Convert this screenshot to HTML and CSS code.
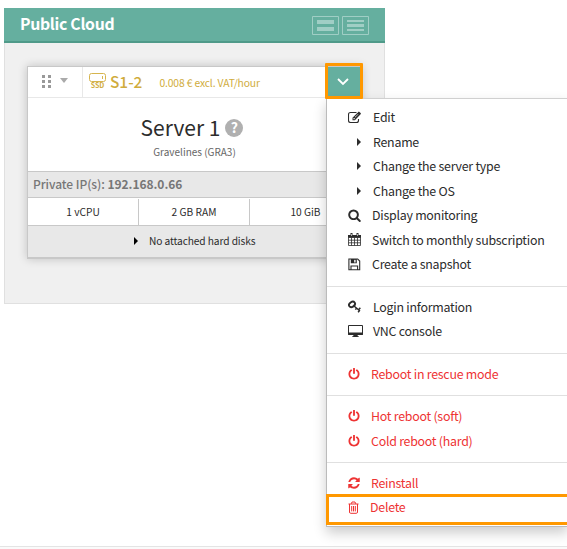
FILE: index.html
```html
<!DOCTYPE html>
<html lang="en">
<head>
<meta charset="utf-8">
<title>Public Cloud</title>
<link rel="stylesheet" href="styles.css">
</head>
<body>
<svg class="defs" width="0" height="0">
  <symbol id="power" viewBox="64 64 1664 1664"><path d="M1664 896q0 156-61 298t-164 245-245 164-298 61-298-61-245-164-164-245-61-298q0-182 80.5-343t226.5-270q43-32 95.5-25t83.5 50q32 42 24.5 94.5t-49.5 84.5q-98 74-151.5 181t-53.5 228q0 104 40.5 198.5t109.5 163.5 163.5 109.5 198.5 40.5 198.5-40.5 163.5-109.5 109.5-163.5 40.5-198.5q0-121-53.5-228t-151.5-181q-42-32-49.5-84.5t24.5-94.5q31-43 84-50t95 25q146 109 226.5 270t80.5 343zm-640-768v640q0 52-38 90t-90 38-90-38-38-90v-640q0-52 38-90t90-38 90 38 38 90z"/></symbol>
  <symbol id="caret" viewBox="0 0 14 14"><path d="M5 3L9 7 5 11z"/></symbol>
</svg>
<main class="page">
  <section class="panel">
    <header class="panel-head">
      <h1>Public Cloud</h1>
      <div class="views">
        <svg width="27" height="19" viewBox="0 0 27 19"><path d="M.5.5h26v18H.5z" fill="none" stroke="#a0cec5"/><path d="M5 4h17v4H5zM5 11h17v4H5z" fill="#a0cec5"/></svg>
        <svg width="27" height="19" viewBox="0 0 27 19"><path d="M.5.5h26v18H.5z" fill="none" stroke="#a0cec5"/><path d="M5 4h17v2H5zM5 8h17v3H5zM5 13h17v2H5z" fill="#a0cec5"/></svg>
      </div>
    </header>
    <article class="card">
      <div class="card-bar">
        <div class="grip">
          <svg width="9" height="14" viewBox="0 0 9 14"><path d="M0 0h3v3H0zM6 0h3v3H6zM0 5h3v3H0zM6 5h3v3H6zM0 10h3v3H0zM6 10h3v3H6z" fill="#999"/></svg>
          <svg class="drop" width="8" height="5" viewBox="0 0 8 5"><path d="M0 0h8L4 5z" fill="#aaa"/></svg>
        </div>
        <div class="flavor">
          <div class="ssd"><svg width="17" height="9" viewBox="0 0 17 9"><rect x=".5" y=".5" width="16" height="8" rx="2" fill="none" stroke="#d6b54e"/><path d="M13 3h1v3h-1z" fill="#d6b54e"/></svg><span>SSD</span></div>
          <span class="model">S1-2</span>
          <span class="price">0.008 € excl. VAT/hour</span>
        </div>
        <button class="toggle"><svg width="12" height="8" viewBox="0 0 12 8"><path d="M1 1l5 5 5-5" fill="none" stroke="#fff" stroke-width="1.8"/></svg></button>
      </div>
      <div class="card-title">
        <div class="name"><span class="server">Server 1</span><span class="help">?</span></div>
        <div class="region">Gravelines (GRA3)</div>
      </div>
      <div class="ip"><span>Private IP(s):</span> <b>192.168.0.66</b></div>
      <div class="specs"><div>1 vCPU</div><div>2 GB RAM</div><div>10 GiB</div></div>
      <div class="disks"><svg width="14" height="14"><use href="#caret"/></svg><span>No attached hard disks</span></div>
    </article>
  </section>

  <nav class="menu">
    <ul class="group first">
      <li><svg class="icon" viewBox="0 0 13 13"><path d="M8.5 1.5H2.5q-2 0-2 2v6q0 2 2 2h6q2 0 2-2V8" fill="none" stroke="currentColor" stroke-width="1.1"/><path d="M4.5 9.3V6.8L10.3.9q.6-.6 1.2 0L12.6 2q.6.6 0 1.2L6.9 9.3zM5.5 7.3v1h1l.5-.5-1-1zM6.9 6.1l3.2-3.2.3.3-3.2 3.2z" fill-rule="evenodd"/></svg><span>Edit</span></li>
      <li class="sub"><svg class="icon"><use href="#caret"/></svg><span>Rename</span></li>
      <li class="sub"><svg class="icon"><use href="#caret"/></svg><span>Change the server type</span></li>
      <li class="sub"><svg class="icon"><use href="#caret"/></svg><span>Change the OS</span></li>
      <li class="n1"><svg class="icon" viewBox="64 64 1664 1728"><path d="M1216 832q0-185-131.5-316.5t-316.5-131.5-316.5 131.5-131.5 316.5 131.5 316.5 316.5 131.5 316.5-131.5 131.5-316.5zm512 832q0 52-38 90t-90 38q-54 0-90-38l-343-342q-179 124-399 124-143 0-273.5-55.5t-225-150-150-225-55.5-273.5 55.5-273.5 150-225 225-150 273.5-55.5 273.5 55.5 225 150 150 225 55.5 273.5q0 220-124 399l343 343q37 37 37 90z"/></svg><span>Display monitoring</span></li>
      <li class="n1"><svg class="icon" viewBox="0 0 13 13"><path d="M.5 2.5h12v10H.5zM.5 4.5h12M.5 7.2h12M.5 9.8h12M3.5 4.5v8M6.5 4.5v8M9.5 4.5v8" fill="none" stroke="currentColor" stroke-width=".8"/><path d="M0 2h13v2.6H0zM2.5 0h2v3.5h-2zM8.5 0h2v3.5h-2z"/><path d="M3.2 1h.6v2h-.6zM9.2 1h.6v2h-.6z" fill="#fff"/></svg><span>Switch to monthly subscription</span></li>
      <li class="n2"><svg class="icon" viewBox="0 0 13 13"><path d="M.9 1h8.8l2 2v8.8H.9zM3 11.8V8h6.6v3.8" fill="none" stroke="currentColor" stroke-width="1.1"/><path d="M2.8 1h6v4.3h-6zM6.2 1.8v2.6h1.4V1.8z" fill-rule="evenodd"/></svg><span>Create a snapshot</span></li>
    </ul>
    <ul class="group">
      <li><svg class="icon" viewBox="0 0 13 13"><ellipse cx="4" cy="4.4" rx="3.2" ry="2.4" transform="rotate(-35 4 4.4)" fill="none" stroke="currentColor" stroke-width="1.9"/><path d="M6 6l6 5M8.7 8L7.4 9.6M10.9 9.4l1.4-1.7M11.4 10.7l-1.3 1.6" fill="none" stroke="currentColor" stroke-width="1.5"/></svg><span>Login information</span></li>
      <li><svg class="icon wide" viewBox="0 0 15 14"><path d="M.5 1.5h14v9H.5z" fill="none" stroke="currentColor"/><path d="M0 8.5h15v2.3H0zM5.5 10.5h4l.3 1.7h1v.8H4.2v-.8h1z"/></svg><span>VNC console</span></li>
    </ul>
    <ul class="group danger">
      <li><svg class="icon"><use href="#power"/></svg><span>Reboot in rescue mode</span></li>
    </ul>
    <ul class="group danger">
      <li><svg class="icon"><use href="#power"/></svg><span>Hot reboot (soft)</span></li>
      <li><svg class="icon"><use href="#power"/></svg><span>Cold reboot (hard)</span></li>
    </ul>
    <ul class="group danger last">
      <li><svg class="icon" viewBox="96 96 1600 1600"><path d="M1639 1056q0 5-1 7-64 268-268 434.5t-478 166.5q-146 0-282.5-55t-243.5-157l-129 129q-19 19-45 19t-45-19-19-45v-448q0-26 19-45t45-19h448q26 0 45 19t19 45-19 45l-137 137q71 66 161 102t187 36q134 0 250-65t186-179q11-17 53-117 8-23 30-23h192q13 0 22.5 9.5t9.5 22.5zm25-800v448q0 26-19 45t-45 19h-448q-26 0-45-19t-19-45 19-45l138-138q-148-137-349-137-134 0-250 65t-186 179q-11 17-53 117-8 23-30 23h-199q-13 0-22.5-9.5t-9.5-22.5v-7q65-268 270-434.5t480-166.5q146 0 284 55.5t245 156.5l130-129q19-19 45-19t45 19 19 45z"/></svg><span>Reinstall</span></li>
      <li class="del"><svg class="icon" viewBox="0 0 13 13"><path d="M.5 3h10M3.3 2.8L4 1h3l.7 1.8M1.5 3v8q0 1.3 1.2 1.3h5.6q1.2 0 1.2-1.3V3M3.7 5v5.4M5.5 5v5.4M7.3 5v5.4" fill="none" stroke="currentColor" stroke-width="1"/></svg><span>Delete</span></li>
    </ul>
  </nav>
  <div class="mark mark-toggle"></div>
  <div class="mark mark-delete"></div>
</main>
<footer class="foot"></footer>
</body>
</html>
```
FILE: styles.css
```css
* { box-sizing: border-box; }
html, body { margin: 0; height: 100%; overflow: hidden; }
body {
  background: #fff;
  color: #2c2c2c;
  font-family: "Noto Sans CJK SC", "Open Sans", sans-serif;
  font-size: 12.4px;
}
svg { display: block; flex: none; }
.defs { position: absolute; }
ul { list-style: none; margin: 0; padding: 0; }

.page { position: relative; height: 546px; padding: 8px 0 0 4px; overflow: hidden; }
.foot { height: 3px; border-top: 1px solid #e4e4e4; background: #fafafa; }

.panel {
  width: 381px;
  height: 296px;
  background: #f0f0f0;
  border: 1px solid #e0e0e0;
  border-top: 0;
}
.panel-head {
  display: flex;
  align-items: flex-start;
  justify-content: space-between;
  height: 35px;
  margin: 0 -1px;
  padding: 0 16px;
  background: #65af9f;
  border-bottom: 2px solid #4f9a89;
}
.panel-head h1 { margin: 0; color: #fff; font-size: 15.8px; font-weight: 700; letter-spacing: -.3px; line-height: 32px; }
.views { display: flex; gap: 3px; padding-top: 8px; }

.card {
  width: 335px;
  margin: 23px 0 0 22px;
  background: #fff;
  border: 1px solid #c8c8c8;
  border-bottom-width: 2px;
  box-shadow: 0 0 9px rgba(0, 0, 0, .2);
}
.card-bar { display: flex; height: 31px; border-bottom: 1px solid #e8e8e8; }
.grip { display: flex; align-items: center; gap: 9px; width: 55px; padding-left: 14px; border-right: 1px solid #e8e8e8; }
.drop { margin-top: -3px; }
.flavor { display: flex; align-items: center; flex: 1; padding-left: 6px; color: #d0ac3c; }
.ssd { width: 17px; margin-top: -3px; }
.ssd span { display: block; height: 7px; font-size: 7px; font-weight: 700; line-height: 7px; text-align: center; }
.model { margin: -3px 0 0 4px; font-size: 15.4px; font-weight: 500; line-height: 28px; }
.price { margin: 1px 0 0 17px; font-size: 10.3px; letter-spacing: -.13px; line-height: 20px; white-space: nowrap; }
.toggle {
  display: flex;
  align-items: center;
  justify-content: center;
  width: 34px;
  height: 31px;
  padding: 0 2px 2px 0;
  border: 0;
  background: #65af9f;
}
.card-title { height: 73px; padding-top: 13px; text-align: center; }
.name { display: flex; align-items: center; justify-content: center; gap: 5px; height: 34px; padding-right: 5px; }
.server { font-size: 21px; line-height: 34px; margin-top: -2px; }
.help {
  width: 18px;
  height: 18px;
  border-radius: 50%;
  background: #b0b0b0;
  color: #fff;
  font-size: 14px;
  font-weight: 700;
  line-height: 17px;
}
.region { color: #666; font-size: 10px; line-height: 14px; }
.ip {
  height: 27px;
  padding-left: 5px;
  background: #e8e8e8;
  border: solid #c8c8c8;
  border-width: 1px 0;
  color: #777;
  font-size: 12px;
  letter-spacing: -.05px;
  line-height: 24px;
}
.ip span { font-weight: 500; }
.specs { display: grid; grid-template-columns: repeat(3, 111px); height: 27px; padding-top: 1px; }
.specs div { border-right: 1px solid #c8c8c8; font-size: 10.2px; line-height: 25px; text-align: center; }
.specs div:last-child { border-right: 0; }
.disks {
  display: flex;
  align-items: center;
  height: 32px;
  padding: 0 0 2px 101px;
  gap: 6px;
  background: #e8e8e8;
  border-top: 1px solid #c8c8c8;
  font-size: 10.2px;
  letter-spacing: -.1px;
}

.menu {
  position: absolute;
  left: 326px;
  top: 98px;
  width: 242px;
  height: 429px;
  background: #fff;
  border: 1px solid #bbb;
  border-top-color: #d0d0d0;
  box-shadow: 0 6px 12px rgba(0, 0, 0, .2);
  letter-spacing: -.25px;
}
.group { padding: 8px 0 9px; border-bottom: 1px solid #e0e0e0; }
.group.first { padding: 6px 0 9px; }
.group.last { border: 0; }
.group li { display: flex; align-items: center; height: 24.5px; padding-left: 21px; line-height: 24px; white-space: nowrap; }
.icon { width: 13px; height: 13px; margin-right: 12px; fill: currentColor; }
.icon.wide { width: 15px; height: 14px; margin-right: 10px; }
.sub .icon { width: 14px; height: 14px; margin: 0 7px 0 4px; }
.n1 .icon { margin-right: 11px; }
.n2 .icon { margin-right: 11px; }
.danger { color: #ee3333; }
.danger .icon { width: 12px; height: 12px; margin-right: 11px; }
.danger .del .icon { width: 13px; height: 13px; margin-right: 9px; }
.group .del { height: 23.5px; }

.mark { position: absolute; border: 3px solid #ff9800; }
.mark-toggle { left: 325px; top: 63px; width: 38px; height: 36px; border-radius: 1px; }
.mark-delete { left: 326px; top: 494px; width: 245px; height: 31px; }
```
